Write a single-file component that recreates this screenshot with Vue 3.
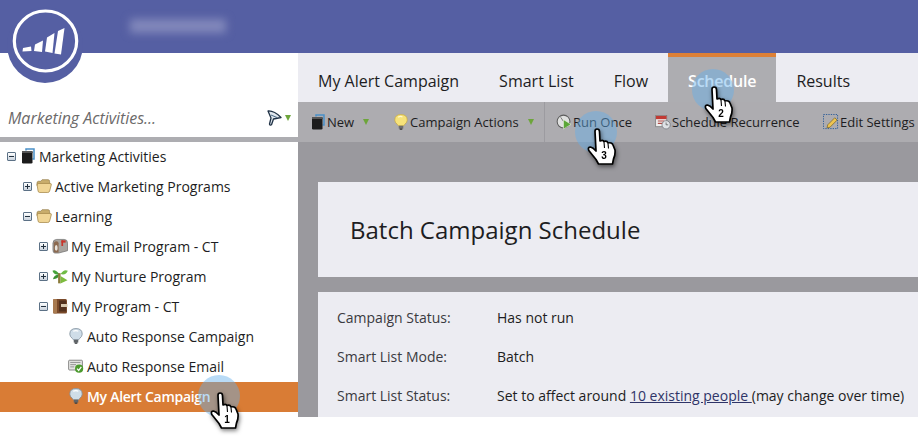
<script setup>
const treeRows = [
  { label: 'Marketing Activities', level: 0, toggle: 'minus', icon: 'book' },
  { label: 'Active Marketing Programs', level: 1, toggle: 'plus', icon: 'folder' },
  { label: 'Learning', level: 1, toggle: 'minus', icon: 'folder' },
  { label: 'My Email Program - CT', level: 2, toggle: 'plus', icon: 'mailbox' },
  { label: 'My Nurture Program', level: 2, toggle: 'plus', icon: 'sprout' },
  { label: 'My Program - CT', level: 2, toggle: 'minus', icon: 'binder' },
  { label: 'Auto Response Campaign', level: 3, icon: 'bulbgrey' },
  { label: 'Auto Response Email', level: 3, icon: 'email' },
  { label: 'My Alert Campaign', level: 3, icon: 'bulbgrey', selected: true }
]
const tabs = ['My Alert Campaign', 'Smart List', 'Flow', 'Schedule', 'Results']
const tools = [
  { label: 'New', icon: 'book', caret: true, cls: 't-new' },
  { label: 'Campaign Actions', icon: 'bulb', caret: true, cls: 't-actions' },
  { label: 'Run Once', icon: 'run', cls: 't-run' },
  { label: 'Schedule Recurrence', icon: 'calendar', cls: 't-sched' },
  { label: 'Edit Settings', icon: 'edit', cls: 't-edit' }
]
const details = [
  ['Campaign Status:', 'Has not run'],
  ['Smart List Mode:', 'Batch']
]
const markers = [
  { n: 1, cls: 'm1' },
  { n: 2, cls: 'm2' },
  { n: 3, cls: 'm3' }
]
</script>

<template>
  <div class="app">
    <svg class="defs" aria-hidden="true">
      <defs>
        <symbol id="i-book" viewBox="0 0 14 16">
          <path d="M5 2.5 L5 1 H13 V11 H11.5" fill="none" stroke="#4a90c8" stroke-width="1.5" />
          <rect x="1" y="3" width="10.5" height="12.5" rx="1.3" fill="#1c1c1c" />
          <rect x="1" y="3" width="10.5" height="2" fill="#555" />
        </symbol>
        <symbol id="i-folder" viewBox="0 0 17 15">
          <path d="M1 5 Q1 2.5 2.5 2.5 H5 L6.5 .8 H13 Q14.5 .8 14.5 3 V7 H1 Z" fill="#c9ad6c" stroke="#8f7740" stroke-width=".7" />
          <path d="M1.2 6.5 Q1 4.8 3 4.8 H15 Q16.8 4.8 16.2 6.5 L14.5 12.8 Q14 14.4 12.5 14.4 H4 Q2.5 14.4 2.2 12.8 Z" fill="#f0d595" stroke="#a48748" stroke-width=".8" />
        </symbol>
        <symbol id="i-mailbox" viewBox="0 0 17 16">
          <path d="M5 1 H13 Q16.5 1 16.5 5 V13 L7 15.5 H3 Q1 15.5 1 12 V5 Q1 1 5 1 Z" fill="#a9a5a0" stroke="#666" stroke-width=".7" />
          <path d="M2 5 Q2 3 4.5 3 Q7 3 7 5 V15 H3 Q2 15 2 13 Z" fill="#8c6a50" />
          <ellipse cx="4.5" cy="10" rx="1.5" ry="3" fill="#e8e4dd" />
          <rect x="10" y="2" width="1.8" height="6" fill="#c8352b" />
          <rect x="10" y="2" width="4.5" height="2.4" fill="#c8352b" />
        </symbol>
        <symbol id="i-sprout" viewBox="0 0 17 16">
          <path d="M8 6 Q3 0 .5 2.5 Q2 7.5 8 6 Z" fill="#46a33a" />
          <path d="M9 6 Q13 0 16.8 2.5 Q15 7.5 9 6 Z" fill="#6fbb45" />
          <path d="M8 6 Q2 7 1 11.5 Q7 11.5 8 6 Z" fill="#3a8f30" />
          <rect x="6.5" y="5" width="2.6" height="10.8" fill="#8a7a3a" />
          <path d="M9 8 L16.5 12.5 L9 16 Z" fill="#7dbb3e" />
        </symbol>
        <symbol id="i-binder" viewBox="0 0 16 16">
          <rect x="1" y="1" width="14" height="14.5" rx="1.5" fill="#7a4a2a" />
          <rect x="1" y="1" width="4" height="14.5" rx="1" fill="#a87a50" />
          <rect x="7" y="2.5" width="7" height="11" fill="#53321e" />
          <rect x="9" y="6" width="6.5" height="3" fill="#d9c9b0" />
        </symbol>
        <symbol id="i-bulbgrey" viewBox="0 0 14 17">
          <path d="M7 .6 Q13.6 .6 13.6 6.5 Q13.6 9 11 11 L9.8 12.5 H4.2 L3 11 Q.4 9 .4 6.5 Q.4 .6 7 .6 Z" fill="#cfdde8" stroke="#82929f" stroke-width=".9" />
          <path d="M4 3.5 Q7 2 9.5 3.5" fill="none" stroke="#fff" stroke-width="1.2" />
          <rect x="4.6" y="12.5" width="4.8" height="3" fill="#5f6468" />
          <rect x="5.6" y="15.3" width="2.8" height="1.5" fill="#3d4043" />
        </symbol>
        <symbol id="i-bulb" viewBox="0 0 14 17">
          <path d="M7 .6 Q13.6 .6 13.6 6.5 Q13.6 9 11 11 L9.8 12.5 H4.2 L3 11 Q.4 9 .4 6.5 Q.4 .6 7 .6 Z" fill="#f6e27a" stroke="#c9a938" stroke-width=".7" />
          <path d="M4 3.5 Q6 2 8.5 3" fill="none" stroke="#fff9cf" stroke-width="1.3" />
          <rect x="4.6" y="12.5" width="4.8" height="3" fill="#6d6d6d" />
          <rect x="5.6" y="15.3" width="2.8" height="1.5" fill="#3b3b3b" />
        </symbol>
        <symbol id="i-email" viewBox="0 0 18 16">
          <rect x=".7" y="1.5" width="15.5" height="11" rx="1" fill="#e6e6e4" stroke="#6f6f6f" stroke-width=".9" />
          <path d="M2.5 4 H14 M2.5 6.5 H9 M2.5 9 H7" stroke="#8a8a8a" />
          <circle cx="12.5" cy="11" r="4.6" fill="#4c9a2e" />
          <path d="M10.2 11 L12 13 L15 9" fill="none" stroke="#fff" stroke-width="1.4" />
        </symbol>
        <symbol id="i-run" viewBox="0 0 17 17">
          <circle cx="8" cy="8" r="6.8" fill="#dfe0df" stroke="#5d5d5d" stroke-width="1.1" />
          <path d="M8 8 L5 3.5" stroke="#777" />
          <path d="M8 6 L16 11 L8 16 Z" fill="#5aa637" stroke="#e9f3df" stroke-width=".6" />
        </symbol>
        <symbol id="i-calendar" viewBox="0 0 17 16">
          <rect x=".7" y="1" width="11.8" height="12" fill="#eee" stroke="#7a7a7a" stroke-width=".8" />
          <rect x="1" y="1.5" width="11.3" height="3.5" fill="#c23a34" />
          <path d="M3 7 H10 M3 9.5 H10" stroke="#b14b46" stroke-width="1.2" />
          <circle cx="11.8" cy="11" r="4.4" fill="#dfe2e6" stroke="#72767c" stroke-width=".8" />
          <path d="M11.8 8.5 V11 H14" fill="none" stroke="#555" stroke-width=".8" />
        </symbol>
        <symbol id="i-edit" viewBox="0 0 17 17">
          <rect x=".5" y=".5" width="15" height="15" fill="none" stroke="#2a5b98" stroke-dasharray="1.4 1.2" />
          <path d="M5 11.5 L12.5 4 L15 6.5 L7.5 14 L4.3 14.8 Z" fill="#eec44f" stroke="#6b5a22" stroke-width=".7" />
        </symbol>
        <symbol id="i-funnel" viewBox="0 0 15 16">
          <path d="M1 1 Q7 .5 14 7.5 L6.5 9 L4.5 14.8 Q3 15.8 2.5 14 L4 8 Z" fill="#dfe7ee" stroke="#1f3145" stroke-width="1.3" stroke-linejoin="round" />
          <path d="M4 5 L10 7.5" stroke="#4c6b88" />
        </symbol>
        <symbol id="i-hand" viewBox="0 0 30 38">
          <path d="M8 3.5 Q8 1 10 1 Q12.5 1 12.5 3.5 L13 13 Q16 11.5 17 13.5 Q20 12.5 21 15 Q25 14 26 17 L28 22 Q28.5 27 26.5 31 L25.5 36 H11.5 L9 31.5 L1.8 22.5 Q.5 19 3.5 19 Q6 19.5 9 23 Z" fill="#fff" stroke="#000" stroke-width="1.7" stroke-linejoin="round" />
          <path d="M17 14 L17.5 20 M21 15.5 L21.5 20.5" stroke="#000" stroke-width="1.1" />
        </symbol>
      </defs>
    </svg>

    <header class="topbar">
      <div class="blurred"></div>
    </header>

    <div class="logo">
      <svg viewBox="0 0 76 76" width="76" height="76">
        <circle cx="38" cy="38" r="38" fill="#555fa3" />
        <ellipse cx="38.5" cy="34" rx="31.2" ry="30" fill="none" stroke="#fff" stroke-width="3.2" />
        <polygon points="16,41 24,39.5 24.5,44 15.5,44.5" fill="#fff" />
        <polygon points="28,37.5 36,33.5 35,45 27,44" fill="#fff" />
        <polygon points="40,30.5 47.5,26 45.5,46 38,44.5" fill="#fff" />
        <polygon points="51,24 57.5,21 54,47.5 47.5,46.5" fill="#fff" />
      </svg>
    </div>

    <div class="workspace">
      <aside class="sidebar">
        <div class="search">
          <span class="search-text">Marketing Activities...</span>
          <svg class="funnel"><use href="#i-funnel" /></svg>
          <span class="caret"></span>
        </div>
        <ul class="tree">
          <li
            v-for="row in treeRows"
            :key="row.label"
            class="tree-row"
            :class="[`level-${row.level}`, { selected: row.selected }]"
          >
            <span v-if="row.toggle" class="toggle" :class="row.toggle"></span>
            <svg class="tree-icon"><use :href="`#i-${row.icon}`" /></svg>
            <span class="tree-label">{{ row.label }}</span>
          </li>
        </ul>
      </aside>

      <main class="main">
        <nav class="tabs">
          <span
            v-for="tab in tabs"
            :key="tab"
            class="tab"
            :class="{ active: tab === 'Schedule' }"
          >{{ tab }}</span>
        </nav>
        <div class="toolbar">
          <span v-for="tool in tools" :key="tool.label" class="tool" :class="tool.cls">
            <svg class="tool-icon"><use :href="`#i-${tool.icon}`" /></svg>
            <span>{{ tool.label }}</span>
            <span v-if="tool.caret" class="caret"></span>
          </span>
        </div>
        <div class="content">
          <section class="card title-card">
            <h1>Batch Campaign Schedule</h1>
          </section>
          <section class="card detail-card">
            <div v-for="d in details" :key="d[0]" class="detail">
              <span class="key">{{ d[0] }}</span>
              <span class="val">{{ d[1] }}</span>
            </div>
            <div class="detail">
              <span class="key">Smart List Status:</span>
              <span class="val">Set to affect around <a class="link">10 existing people </a>(may change over time)</span>
            </div>
          </section>
        </div>
      </main>
    </div>

    <div v-for="m in markers" :key="m.n" class="marker" :class="m.cls">
      <span class="halo"></span>
      <svg class="hand" viewBox="0 0 30 38">
        <use href="#i-hand" />
        <text x="17" y="31" class="hand-num">{{ m.n }}</text>
      </svg>
    </div>
  </div>
</template>

<style>
html, body { margin: 0; background: #fff; }
</style>

<style scoped>
.app {
  position: relative;
  width: 918px;
  height: 439px;
  overflow: hidden;
  font-family: "Open Sans", sans-serif;
  font-size: 14px;
  color: #1d1d22;
  background: #fff;
}
.defs { position: absolute; width: 0; height: 0; }
.topbar {
  height: 53px;
  background: #555fa3;
  display: flex;
  align-items: center;
  padding-left: 130px;
}
.blurred {
  width: 96px;
  height: 14px;
  margin-top: -1px;
  background: #8288bb;
  filter: blur(4px);
}
.logo { position: absolute; left: 7px; top: 7px; width: 76px; height: 76px; }
.workspace { display: flex; height: 364px; }
.sidebar { width: 298px; flex: none; display: flex; flex-direction: column; }
.search {
  height: 89px;
  flex: none;
  box-sizing: border-box;
  padding: 53px 7px 0 8px;
  display: flex;
  align-items: flex-start;
  border-bottom: 5px solid #adadb1;
}
.search-text {
  flex: 1;
  font-style: italic;
  font-size: 16px;
  line-height: 24px;
  letter-spacing: -.03px;
  color: #6c6a6a;
}
.funnel { width: 15px; height: 16px; margin: 4px 3px 0 0; }
.caret {
  display: inline-block;
  width: 0;
  height: 0;
  border-left: 3.5px solid transparent;
  border-right: 3.5px solid transparent;
  border-top: 6px solid #6da53b;
}
.search .caret { margin-top: 9px; }
.tree { list-style: none; margin: 0; padding: 0; }
.tree-row {
  height: 30px;
  box-sizing: border-box;
  padding-bottom: 2px;
  display: flex;
  align-items: center;
  white-space: nowrap;
}
.level-0 { padding-left: 7px; }
.level-1 { padding-left: 23px; }
.level-2 { padding-left: 39px; }
.level-3 { padding-left: 68px; }
.toggle {
  position: relative;
  width: 7px;
  height: 7px;
  margin-right: 4px;
  border: 1px solid #5c7186;
  border-radius: 1px;
  background: linear-gradient(#fff, #c9d2dc);
  flex: none;
}
.toggle::before {
  content: "";
  position: absolute;
  left: 1px;
  right: 1px;
  top: 3px;
  height: 1px;
  background: #22313f;
}
.toggle.plus::after {
  content: "";
  position: absolute;
  top: 1px;
  bottom: 1px;
  left: 3px;
  width: 1px;
  background: #22313f;
}
.tree-icon { width: 16px; height: 16px; margin-right: 3px; flex: none; }
.selected { background: #d97c35; color: #fff; font-weight: 600; }
.selected .tree-label { letter-spacing: -.28px; }
.main { flex: 1; min-width: 0; display: flex; flex-direction: column; overflow: hidden; }
.tabs { height: 49px; flex: none; display: flex; background: #ececf2; }
.tab {
  padding: 0 20px;
  font-size: 16px;
  line-height: 57px;
  white-space: nowrap;
}
.tab.active {
  background: #adadb1;
  border-top: 4px solid #dd8036;
  line-height: 49px;
  color: #fff;
  font-weight: 600;
  letter-spacing: -.2px;
}
.toolbar {
  height: 40px;
  flex: none;
  display: flex;
  align-items: center;
  background: #adacb0;
  font-size: 13px;
  white-space: nowrap;
}
.tool { display: flex; align-items: center; height: 100%; box-sizing: border-box; flex: none; }
.tool-icon { width: 16px; height: 16px; margin-right: 1px; flex: none; }
.tool .caret { margin-left: 9px; }
.t-new { padding-left: 12px; width: 95px; }
.t-actions { width: 152px; border-right: 1px solid #9c9ba0; }
.t-run { padding-left: 11px; width: 110px; }
.t-sched { width: 168px; }
.content {
  flex: 1;
  background: #9a999e;
  padding: 40px 0 0 20px;
  display: flex;
  flex-direction: column;
  gap: 15px;
}
.card { background: #ececf2; }
.title-card { height: 95px; flex: none; display: flex; align-items: center; padding-left: 32px; }
h1 { margin: 0; font-size: 24px; font-weight: 400; }
.detail-card { flex: 1; padding: 16px 0 0 19px; }
.detail { display: flex; height: 39px; line-height: 19px; white-space: nowrap; }
.key { width: 160px; color: #3a3a40; flex: none; }
.link { color: #2f3468; text-decoration: underline; }
.marker { position: absolute; width: 0; height: 0; }
.m1 { left: 219px; top: 396px; }
.m2 { left: 713px; top: 90px; }
.m3 { left: 596px; top: 132px; }
.halo {
  position: absolute;
  left: -21px;
  top: -21px;
  width: 42px;
  height: 42px;
  border-radius: 50%;
  background: rgba(100, 175, 235, .45);
}
.hand {
  position: absolute;
  left: -9px;
  top: -4px;
  width: 30px;
  height: 38px;
  filter: drop-shadow(1px 2px 2px rgba(0, 0, 0, .5));
  overflow: visible;
}
.hand-num {
  font-family: "Liberation Sans", sans-serif;
  font-size: 10px;
  font-weight: 700;
  text-anchor: middle;
  fill: #000;
}
</style>
